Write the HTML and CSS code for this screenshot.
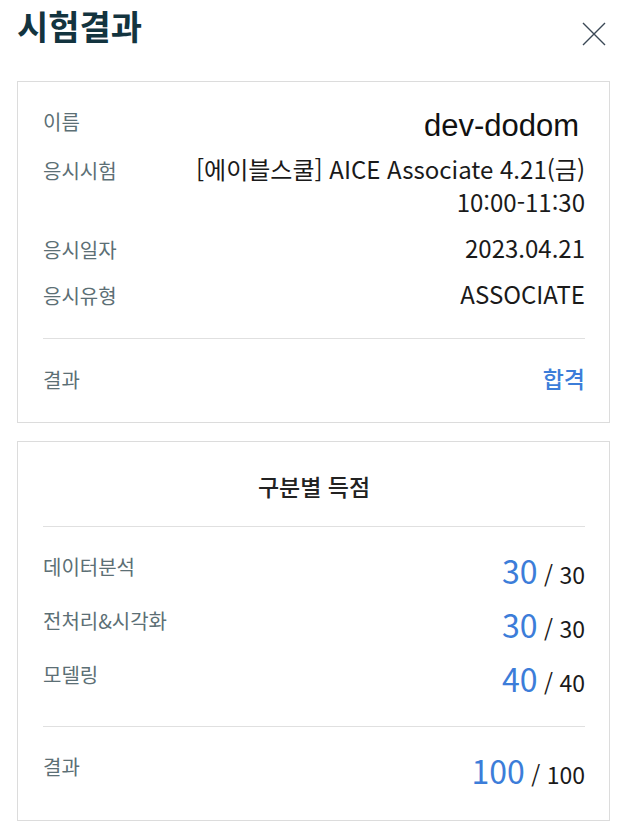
FILE: index.html
```html
<!DOCTYPE html>
<html lang="ko">
<head>
  <meta charset="UTF-8" />
  <meta name="viewport" content="width=device-width, initial-scale=1" />
  <title>시험결과</title>
  <link rel="stylesheet" href="styles.css">
</head>
<body>

  <div class="page">
    <div class="header">
      <h1>시험결과</h1>
      <button type="button" class="close-btn" aria-label="닫기">
        <svg width="24" height="24" viewBox="0 0 24 24">
          <path d="M1 1 L23 23 M23 1 L1 23" stroke="#3b4856" stroke-width="1.4" fill="none" />
        </svg>
      </button>
    </div>

    <div class="card info-card">
      <div class="info-list">
        <div class="info-row name-row">
          <span class="label">이름</span>
          <span class="value name-value">dev-dodom</span>
        </div>
        <div class="info-row">
          <span class="label">응시시험</span>
          <span class="value">[에이블스쿨] AICE Associate 4.21(금)<br>10:00-11:30</span>
        </div>
        <div class="info-row">
          <span class="label">응시일자</span>
          <span class="value">2023.04.21</span>
        </div>
        <div class="info-row">
          <span class="label">응시유형</span>
          <span class="value">ASSOCIATE</span>
        </div>
      </div>
      <div class="divider info-divider"></div>
      <div class="info-row result-row">
        <span class="label">결과</span>
        <span class="value pass">합격</span>
      </div>
    </div>

    <div class="card score-card">
      <h2>구분별 득점</h2>
      <div class="divider score-divider"></div>
      <div class="score-list">
        <div class="score-row">
          <span class="label">데이터분석</span>
          <span class="score"><b>30</b> / 30</span>
        </div>
        <div class="score-row">
          <span class="label">전처리&amp;시각화</span>
          <span class="score"><b>30</b> / 30</span>
        </div>
        <div class="score-row">
          <span class="label">모델링</span>
          <span class="score"><b>40</b> / 40</span>
        </div>
      </div>
      <div class="divider total-divider"></div>
      <div class="score-row">
        <span class="label">결과</span>
        <span class="score"><b>100</b> / 100</span>
      </div>
    </div>
  </div>

</body>
</html>
```

FILE: styles.css
```css
* {
  box-sizing: border-box;
}

body {
  margin: 0;
  background: #ffffff;
  font-family: 'Noto Sans CJK KR', 'Noto Sans', sans-serif;
  color: #1a1a1a;
}

.page {
  padding: 0 10px 0 17px;
}

.header {
  display: flex;
  justify-content: space-between;
  align-items: flex-start;
  padding: 6px 0 35px 0;
}

.header h1 {
  margin: 0;
  font-size: 34px;
  line-height: 40px;
  font-weight: 700;
  color: #13343f;
}

.close-btn {
  background: none;
  border: none;
  padding: 0;
  margin: 16px 4px 0 0;
  cursor: pointer;
  line-height: 0;
}

.card {
  border: 1px solid #dcdcdc;
  padding: 0 24px 0 25px;
}

.card + .card {
  margin-top: 18px;
}

.info-card {
  padding-top: 23px;
  padding-bottom: 27px;
}

.info-list {
  display: flex;
  flex-direction: column;
  gap: 13px;
}

.info-row {
  display: flex;
  justify-content: space-between;
  align-items: baseline;
}

.label {
  font-size: 20px;
  line-height: 29px;
  color: #5c6f75;
}

.value {
  font-size: 24px;
  line-height: 33px;
  text-align: right;
  color: #1a1a1a;
}

.name-row {
  align-items: flex-start;
  margin-bottom: -3px;
}

.name-row .label {
  line-height: 33px;
}

.name-value {
  font-family: 'Liberation Sans', Arial, sans-serif;
  font-size: 31px;
  margin-top: 4px;
  margin-right: 6px;
  color: #111;
}

.divider {
  height: 1px;
  background: #e0e0e0;
}

.info-divider {
  margin-top: 28px;
}

.result-row {
  padding-top: 23px;
}

.pass {
  font-size: 23px;
  font-weight: 500;
  color: #3c7dd9;
}

.score-card {
  padding-top: 29px;
  padding-bottom: 24px;
}

.score-card h2 {
  margin: 0;
  text-align: center;
  font-size: 23px;
  line-height: 30px;
  font-weight: 500;
  color: #222;
}

.score-divider {
  margin: 25px 0 25px 0;
}

.score-list {
  display: flex;
  flex-direction: column;
  gap: 10px;
}

.score-row {
  display: flex;
  justify-content: space-between;
  align-items: flex-start;
}

.score {
  display: block;
  height: 44px;
  font-size: 23px;
  line-height: 44px;
  color: #1a1a1a;
}

.score b {
  font-size: 32px;
  line-height: 1;
  font-weight: 400;
  color: #3c7dd9;
}

.total-divider {
  margin: 22px 0 25px 0;
}
```
